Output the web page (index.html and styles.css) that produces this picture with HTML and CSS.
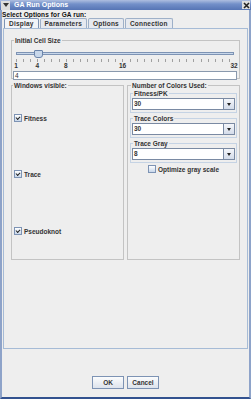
FILE: index.html
```html
<html>
<head>
<link rel="stylesheet" href="styles.css">
</head>
<body>
<div class="window">
  <div class="titlebar">
    <span class="menu-btn"><svg width="8" height="8" viewBox="0 0 8 8"><path d="M1 2 L7 2 L4 6 Z" fill="#333"/></svg></span>
    <span class="title">GA Run Options</span>
    <span class="close-btn"><svg width="7" height="7" viewBox="0 0 7 7"><path d="M1 1 L6 6 M6 1 L1 6" stroke="#222" stroke-width="1.6"/></svg></span>
  </div>
  <div class="prompt">Select Options for GA run:</div>
  <div class="tabs">
    <div class="tab selected">Display</div>
    <div class="tab">Parameters</div>
    <div class="tab">Options</div>
    <div class="tab">Connection</div>
  </div>
  <div class="panel">
    <fieldset class="group cell-size">
      <legend>Initial Cell Size</legend>
      <div class="slider">
        <div class="track"></div>
        <div class="thumb" style="left:21px"></div>
        <div class="ticks"></div>
        <div class="labels">
          <span style="left:0px">1</span>
          <span style="left:21.3px">4</span>
          <span style="left:49.7px">8</span>
          <span style="left:106.5px">16</span>
          <span style="left:218px">32</span>
        </div>
      </div>
      <div class="textfield">4</div>
    </fieldset>

    <div class="columns">
      <fieldset class="group windows">
        <legend>Windows visible:</legend>
        <label class="check fitness"><span class="box checked"></span>Fitness</label>
        <label class="check trace"><span class="box checked"></span>Trace</label>
        <label class="check pseudo"><span class="box checked"></span>Pseudoknot</label>
      </fieldset>

      <fieldset class="group colors">
        <legend>Number of Colors Used:</legend>
        <fieldset class="sub">
          <legend>Fitness/PK</legend>
          <div class="combo"><span class="value">30</span><span class="arrow"></span></div>
        </fieldset>
        <fieldset class="sub">
          <legend>Trace Colors</legend>
          <div class="combo"><span class="value">30</span><span class="arrow"></span></div>
        </fieldset>
        <fieldset class="sub">
          <legend>Trace Gray</legend>
          <div class="combo"><span class="value">8</span><span class="arrow"></span></div>
        </fieldset>
        <label class="check optimize"><span class="box"></span>Optimize gray scale</label>
      </fieldset>
    </div>
  </div>
  <div class="buttons">
    <div class="button">OK</div>
    <div class="button">Cancel</div>
  </div>
</div>
</body>
</html>
```
FILE: styles.css
```css
body {
	margin: 0;
	background: #eeeeee;
	font-family: "Liberation Sans", Arial, sans-serif;
	font-size: 6.5px;
	font-weight: bold;
	color: #333333;
}
.window {
	width: 251px;
	height: 399px;
	box-sizing: border-box;
	border-left: 2px solid #8ea3c9;
	border-right: 2px solid #8ea3c9;
	border-bottom: 2px solid #33528f;
	background: #eeeeee;
	display: flex;
	flex-direction: column;
}
.titlebar {
	height: 10px;
	margin: 0 -2px;
	display: flex;
	align-items: center;
	background: linear-gradient(180deg, #aebee0 0%, #7390c9 40%, #5675b5 100%);
	color: #ffffff;
}
.menu-btn {
	width: 9px;
	height: 9px;
	margin-left: 1px;
	background: #dddddd;
	display: flex;
	align-items: center;
	justify-content: center;
}
.title {
	margin-left: 4px;
	flex: 1;
	font-size: 7px;
	line-height: 10px;
}
.close-btn {
	width: 8px;
	height: 8px;
	margin-right: 1px;
	background: #dddddd;
	display: flex;
	align-items: center;
	justify-content: center;
}
.prompt {
	height: 8px;
	line-height: 8px;
	margin-top: 1px;
	color: #111111;
	letter-spacing: 0.1px;
}
.tabs {
	display: flex;
	height: 10px;
	padding-left: 2px;
	margin-top: -1px;
}
.tab {
	height: 10px;
	box-sizing: border-box;
	line-height: 9px;
	padding: 0 4px;
	letter-spacing: 0.2px;
	border: 1px solid #9eb0c8;
	border-bottom: none;
	background: #e6e9ef;
	margin-right: 1px;
	border-radius: 2px 2px 0 0;
}
.tab.selected {
	background: #f2f4f8;
	border-color: #7d93b4;
}
.panel {
	height: 321px;
	margin: 0 1px;
	box-sizing: border-box;
	border: 1px solid #a6bbd6;
	padding: 8px 7px 0 7px;
}
.group {
	margin: 0;
	padding: 0;
	min-width: 0;
	border: 1px solid #c3c3c3;
	box-sizing: border-box;
}
.group legend, .sub legend {
	padding: 0 1px;
	margin-left: 1px;
	line-height: 7px;
}
.cell-size {
	height: 42px;
	padding: 4px 1px 0 1px;
}
.slider {
	position: relative;
	height: 22px;
	margin: 0 4px 0 3px;
}
.track {
	position: absolute;
	left: 0;
	right: 0;
	top: 4px;
	height: 3px;
	box-sizing: border-box;
	border: 1px solid #7d93b4;
	background: #c8d7ea;
}
.thumb {
	position: absolute;
	top: 2px;
	width: 7px;
	height: 6px;
	margin-left: -3px;
	background: #c8d7ea;
	border: 1px solid #6a84aa;
	border-radius: 1px 1px 3px 3px;
}
.ticks {
	position: absolute;
	left: 0;
	right: -1px;
	top: 11px;
	height: 3px;
	background: repeating-linear-gradient(90deg, #a0a0a0 0, #a0a0a0 1px, transparent 1px, transparent 7.1px);
}
.labels span {
	position: absolute;
	top: 15px;
	line-height: 6px;
	transform: translateX(-50%);
	color: #333;
}
.textfield {
	height: 9px;
	box-sizing: border-box;
	margin: 1px 1px 0 0;
	border: 1px solid #8a99ad;
	background: #ffffff;
	line-height: 7px;
	padding-left: 1px;
	font-weight: normal;
}
.columns {
	display: flex;
	gap: 3px;
	margin-top: 3px;
	height: 178px;
}
.windows {
	width: 113px;
}
.colors {
	flex: 1;
	padding: 0 2px;
}
.check {
	display: flex;
	align-items: center;
	gap: 2px;
	line-height: 7px;
}
.fitness {
	margin: 25px 0 0 2px;
}
.trace {
	margin: 48px 0 0 2px;
}
.pseudo {
	margin: 49px 0 0 2px;
}
.box {
	width: 6px;
	height: 6px;
	border: 1px solid #7d93b4;
	background: linear-gradient(180deg, #ffffff, #c8d7ea);
	position: relative;
}
.box.checked::after {
	content: "";
	position: absolute;
	left: 1px;
	top: 1px;
	width: 3px;
	height: 2px;
	border-left: 1px solid #222;
	border-bottom: 1px solid #222;
	transform: rotate(-45deg);
}
.sub {
	margin: 1px 0 2px 0;
	padding: 1px 1px 2px 1px;
	border: 1px solid #c5d3e4;
	min-width: 0;
}
.combo {
	height: 12px;
	box-sizing: border-box;
	border: 1px solid #7a8aa3;
	background: #ffffff;
	display: flex;
}
.combo .value {
	flex: 1;
	line-height: 10px;
	padding-left: 1px;
}
.combo .arrow {
	width: 10px;
	border-left: 1px solid #7a8aa3;
	background: linear-gradient(180deg, #f4f6fa, #d4dcea);
	position: relative;
}
.combo .arrow::after {
	content: "";
	position: absolute;
	left: 3px;
	top: 4px;
	border-left: 2px solid transparent;
	border-right: 2px solid transparent;
	border-top: 3px solid #222;
}
.optimize {
	justify-content: center;
	margin-top: 1px;
}
.buttons {
	flex: 1;
	display: flex;
	justify-content: center;
	align-items: flex-end;
	gap: 3px;
	padding-bottom: 8px;
}
.button {
	height: 13px;
	width: 32px;
	box-sizing: border-box;
	border: 1px solid #7d93b4;
	background: linear-gradient(180deg, #fbfcfd, #dde3ec);
	line-height: 11px;
	text-align: center;
}
```
